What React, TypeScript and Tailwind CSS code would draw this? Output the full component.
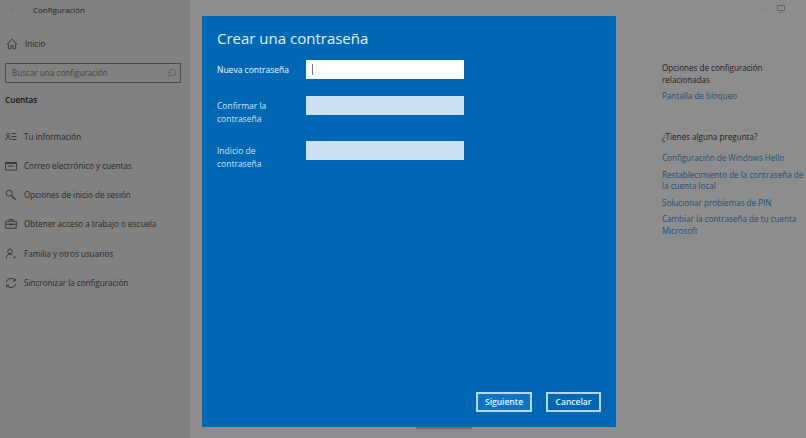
import React from 'react';
import { ArrowLeft, Search, Minus } from 'lucide-react';

const Icon = ({ children }: { children: React.ReactNode }) => (
  <svg width="12" height="12" viewBox="0 0 12 12" fill="none" stroke="currentColor" strokeWidth="0.9" className="shrink-0 text-[#333]">
    {children}
  </svg>
);

const navItems = [
  {
    label: 'Tu información',
    icon: (
      <>
        <circle cx="3" cy="4" r="1.5" />
        <path d="M0.8 9c0-1.6 1-2.6 2.2-2.6S5.2 7.4 5.2 9M6.5 2.5h5M6.5 5.5h5M6.5 8.5h5" />
      </>
    ),
  },
  {
    label: 'Correo electrónico y cuentas',
    icon: (
      <>
        <path d="M0.5 2.5h11v7.5h-11z" />
        <path d="M0.5 3.2h11" strokeWidth="1.4" />
        <path d="M3 6h6" />
      </>
    ),
  },
  {
    label: 'Opciones de inicio de sesión',
    icon: (
      <>
        <circle cx="4.2" cy="4.2" r="3" />
        <path d="M6.4 6.4l4.4 4.2M8.6 8.4l-1.2 1.3" strokeWidth="1.2" />
      </>
    ),
  },
  {
    label: 'Obtener acceso a trabajo o escuela',
    icon: (
      <>
        <path d="M0.7 3.2h10.6v7h-10.6zM4 3.2v-1.6h4v1.6M0.7 6.2h10.6" />
        <path d="M4.5 6.5h3" strokeWidth="1.4" />
      </>
    ),
  },
  {
    label: 'Familia y otros usuarios',
    icon: (
      <>
        <circle cx="5" cy="3.4" r="2.3" />
        <path d="M1.2 10.5c0-2.6 1.6-4.4 3.8-4.4 1 0 1.9.4 2.5 1M8.5 9.3h2M9.5 8.3v2" />
      </>
    ),
  },
  {
    label: 'Sincronizar la configuración',
    icon: (
      <>
        <path d="M1.2 5.2A4.9 4.9 0 0 1 10 3.4M10.8 6.8A4.9 4.9 0 0 1 2 8.6" />
        <path d="M10.4 1.4v2.4H8M1.6 10.6V8.2H4" />
      </>
    ),
  },
];

const helpLinks = [
  'Configuración de Windows Hello',
  'Restablecimiento de la contraseña de la cuenta local',
  'Solucionar problemas de PIN',
  'Cambiar la contraseña de tu cuenta Microsoft',
];

const Sidebar = () => (
  <aside className="w-[190px] shrink-0 bg-[#818181] text-[#1f1f1f]">
    <div className="flex h-[19px] items-center pl-[8px]">
      <ArrowLeft size={11} strokeWidth={1} className="text-[#6b6b6b]" />
      <span className="ml-[14px] text-[8px]">Configuración</span>
    </div>
    <div className="mt-[16px] flex h-[18px] items-center pl-[6px]">
      <svg width="12" height="12" viewBox="0 0 12 12" fill="none" stroke="currentColor" strokeWidth="0.9" className="text-[#333]">
        <path d="M0.8 6.2L6 1.2l5.2 5M2.3 5.2v5.6h2.6V7.6h2.2v3.2h2.6V5.2" />
      </svg>
      <span className="ml-[7px] text-[8.2px] text-[#2a2a2a]">Inicio</span>
    </div>
    <div className="mx-[5px] mt-[10px] flex h-[20px] w-[176px] items-center justify-between border border-[#4c4c4c] pl-[6px] pr-[3px]">
      <span className="text-[8.1px] text-[#444]">Buscar una configuración</span>
      <Search size={10} strokeWidth={1.2} className="-scale-x-100 text-[#444]" />
    </div>
    <div className="mt-[11px] pl-[5px] text-[8.2px] font-semibold text-[#111]">Cuentas</div>
    <ul className="mt-[16px]">
      {navItems.map(({ label, icon }) => (
        <li key={label} className="flex h-[29.2px] items-center pl-[5px]">
          <Icon>{icon}</Icon>
          <span className="ml-[7px] whitespace-nowrap text-[8.1px] text-[#2a2a2a]">{label}</span>
        </li>
      ))}
    </ul>
  </aside>
);

const RightPanel = () => (
  <main className="relative flex-1 bg-[#8d8d8d]">
    <div className="absolute right-[21px] top-[5px] flex items-center gap-[10px] text-[#7a7a7a]">
      <Minus size={8} strokeWidth={1} />
      <svg width="8" height="8" viewBox="0 0 8 8" fill="none" stroke="currentColor" className="text-[#666]">
        <path d="M0.5 0.5h7v5h-7zM2.5 7.5h3" />
      </svg>
    </div>
    <div className="ml-[472px] w-[143px] pt-[62px] text-[8.1px] leading-[11.5px]">
      <p className="text-[#222]">Opciones de configuración relacionadas</p>
      <p className="mt-[5px] text-[#1f4e79]">Pantalla de bloqueo</p>
      <p className="mt-[29px] text-[#222]">¿Tienes alguna pregunta?</p>
      <ul className="mt-[10px] space-y-[5px] text-[#1f4e79]">
        {helpLinks.map(link => (
          <li key={link}>{link}</li>
        ))}
      </ul>
    </div>
  </main>
);

const Field = ({ label, active, className }: { label: string; active?: boolean; className: string }) => (
  <div className={`flex ${className}`}>
    <label className={`mr-[19px] w-[70px] shrink-0 pt-[4px] text-[8.5px] leading-[12.5px] ${active ? 'whitespace-nowrap text-[#f2f8fc]' : 'text-[#cfe3f2]'}`}>
      {label}
    </label>
    {active ? (
      <div className="flex h-[19px] w-[158px] items-center bg-white pl-[6px]">
        <span className="h-[11px] w-px bg-[#777]" />
      </div>
    ) : (
      <div className="h-[19px] w-[158px] bg-[#cde0f0]" />
    )}
  </div>
);

export default function App() {
  return (
    <div
      className="relative flex h-[438px] w-[806px] overflow-hidden"
      style={{ fontFamily: '"Open Sans", "Noto Sans", sans-serif' }}
    >
      <Sidebar />
      <RightPanel />
      {/* password dialog over the settings page */}
      <div className="absolute left-[202px] top-[16px] flex h-[411px] w-[414px] flex-col bg-[#0067b5] px-[15px] text-white">
        <h1 className="mt-[12px] text-[15px] leading-[20px] text-[#e3f0fa]">Crear una contraseña</h1>
        <Field label="Nueva contraseña" active className="mt-[12px]" />
        <Field label="Confirmar la contraseña" className="mt-[17px]" />
        <Field label="Indicio de contraseña" className="mt-[16px]" />
        <div className="mt-auto mb-[15px] flex justify-end gap-[14px]">
          <button className="h-[20px] w-[56px] border-2 border-[#b5d6ee] bg-[#0a74c8] text-[8.5px] font-semibold text-[#e8f3fb]">
            Siguiente
          </button>
          <button className="h-[20px] w-[55px] border-2 border-[#b5d6ee] text-[8.5px] font-semibold text-[#e8f3fb]">
            Cancelar
          </button>
        </div>
      </div>
      <div className="absolute left-[416px] top-[427px] h-[2px] w-[56px] bg-[#6f6f6f]" />
    </div>
  );
}
